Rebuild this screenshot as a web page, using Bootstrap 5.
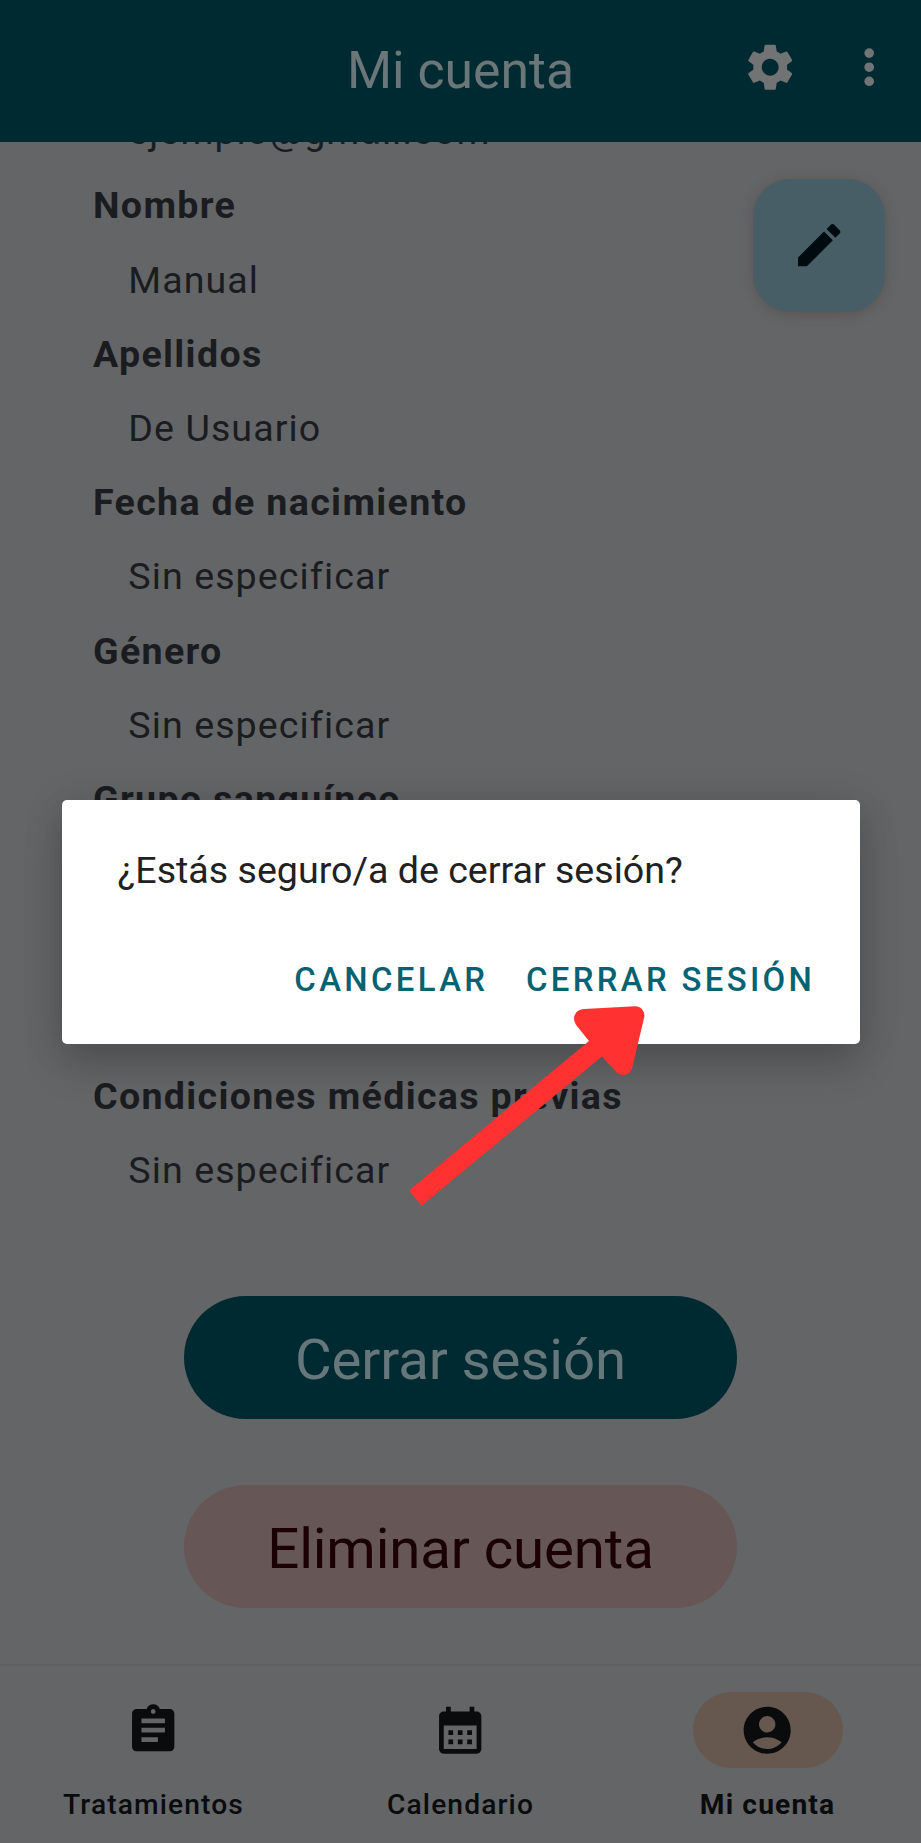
<!DOCTYPE html>
<html lang="es">
<head>
<meta charset="utf-8">
<meta name="viewport" content="width=device-width, initial-scale=1">
<title>Mi cuenta</title>
<link href="https://cdn.jsdelivr.net/npm/bootstrap@5.3.0/dist/css/bootstrap.min.css" rel="stylesheet">
<style>
  body { font-family: Roboto, "Liberation Sans", sans-serif; background: #646567; color: #0a0b0d; }
  .app-screen { width: 921px; height: 1843px; }
  .app-header { height: 142px; background: #002a31; color: #6a7678; }
  .app-header h1 { font-size: 51.7px; line-height: 60px; padding-top: 40.5px; letter-spacing: 0; }
  .header-actions { top: 39px; right: 24px; gap: 42.5px; color: #717375; }
  .icon { width: 56.4px; height: 56.4px; fill: currentColor; display: block; flex: none; }
  .fab { top: 37px; right: 36.5px; width: 131.6px; height: 132.6px; border-radius: 37.6px; background: #485e66; color: #000b10; box-shadow: 0 2px 12px rgba(75,60,50,.4); }
  .profile { margin: -47.8px 0 0 93px; font-size: 37.6px; line-height: 74.2px; color: #1a1c20; }
  .profile dt { letter-spacing: 1.33px; }
  .profile dd { margin: 0 0 0 35.3px; letter-spacing: 1.08px; }
  .profile .after-gap { margin-top: 222.6px; }
  .account-btn { width: 552.5px; height: 123px; font-size: 56.4px; line-height: 1; letter-spacing: -.12px; border: 0; }
  .btn-logout { background: #002a31; color: #66777b; margin-top: 89.2px; padding: 10px 0 5px; }
  .btn-delete { background: #665756; color: #1a0002; margin-top: 65.5px; padding: 11px 0 5px; }
  .bottom-nav { height: 179px; border-top: 2px solid #5e6062; font-size: 28.2px; letter-spacing: 1.12px; padding-top: 26px; }
  .nav-pill { width: 150px; height: 75.5px; }
  .nav-pill.selected { background: #66584e; }
  .nav-caption { line-height: 34px; margin-top: 20.5px; }
  .dialog { left: 61.5px; top: 799.5px; width: 798.3px; height: 244.5px; background: #fff; border-radius: 5px; box-shadow: 0 22px 40px rgba(0,0,0,.16), 0 4px 42px rgba(0,0,0,.12); }
  .dialog-text { font-size: 37.6px; line-height: 46px; padding: 47px 0 0 56px; color: #212122; }
  .dialog-actions { gap: 37.5px; padding-right: 44.5px; margin-top: 63px; }
  .dialog-actions button { font-size: 32.9px; line-height: 48px; font-weight: 500; letter-spacing: 3.35px; color: #056270; }
  .pointer-arrow { left: 0; top: 0; pointer-events: none; }
</style>
</head>
<body>
<div class="app-screen position-relative overflow-hidden d-flex flex-column">
  <header class="app-header position-relative z-1 flex-shrink-0 text-center">
    <h1 class="m-0 fw-normal">Mi cuenta</h1>
    <div class="header-actions position-absolute d-flex">
      <svg class="icon" viewBox="0 0 24 24"><path d="M19.14,12.94c0.04-0.3,0.06-0.61,0.06-0.94c0-0.32-0.02-0.64-0.07-0.94l2.03-1.58c0.18-0.14,0.23-0.41,0.12-0.61l-1.92-3.32c-0.12-0.22-0.37-0.29-0.59-0.22l-2.39,0.96c-0.5-0.38-1.03-0.7-1.62-0.94L14.4,2.81c-0.04-0.24-0.24-0.41-0.48-0.41h-3.84c-0.24,0-0.43,0.17-0.47,0.41L9.25,5.35C8.66,5.59,8.12,5.92,7.63,6.29L5.24,5.33c-0.22-0.08-0.47,0-0.59,0.22L2.74,8.87C2.62,9.08,2.66,9.34,2.86,9.48l2.03,1.58C4.84,11.36,4.8,11.69,4.8,12s0.02,0.64,0.07,0.94l-2.03,1.58c-0.18,0.14-0.23,0.41-0.12,0.61l1.92,3.32c0.12,0.22,0.37,0.29,0.59,0.22l2.39-0.96c0.5,0.38,1.03,0.7,1.62,0.94l0.36,2.54c0.05,0.24,0.24,0.41,0.48,0.41h3.84c0.24,0,0.44-0.17,0.47-0.41l0.36-2.54c0.59-0.24,1.13-0.56,1.62-0.94l2.39,0.96c0.22,0.08,0.47,0,0.59-0.22l1.92-3.32c0.12-0.22,0.07-0.47-0.12-0.61L19.14,12.94z M12,15.6c-1.98,0-3.6-1.62-3.6-3.6s1.62-3.6,3.6-3.6s3.6,1.62,3.6,3.6S13.98,15.6,12,15.6z"/></svg>
      <svg class="icon" viewBox="0 0 24 24"><circle cx="12" cy="6" r="2.05"/><circle cx="12" cy="12" r="2.05"/><circle cx="12" cy="18" r="2.05"/></svg>
    </div>
  </header>

  <main class="position-relative flex-grow-1 overflow-hidden">
    <dl class="profile">
      <dd>ejemplo@gmail.com</dd>
      <dt>Nombre</dt>
      <dd>Manual</dd>
      <dt>Apellidos</dt>
      <dd>De Usuario</dd>
      <dt>Fecha de nacimiento</dt>
      <dd>Sin especificar</dd>
      <dt>Género</dt>
      <dd>Sin especificar</dd>
      <dt>Grupo sanguíneo</dt>
      <dt class="after-gap">Condiciones médicas previas</dt>
      <dd>Sin especificar</dd>
    </dl>
    <div class="d-flex flex-column align-items-center">
      <button class="btn account-btn btn-logout rounded-pill" type="button">Cerrar sesión</button>
      <button class="btn account-btn btn-delete rounded-pill" type="button">Eliminar cuenta</button>
    </div>
    <button class="btn fab position-absolute border-0 p-0 d-flex align-items-center justify-content-center" type="button" aria-label="Editar">
      <svg class="icon" viewBox="0 0 24 24"><path d="M3 17.25V21h3.75L17.81 9.94l-3.75-3.75L3 17.25zM20.71 7.04c.39-.39.39-1.02 0-1.41l-2.34-2.34c-.39-.39-1.02-.39-1.41 0l-1.83 1.83 3.75 3.75 1.83-1.83z"/></svg>
    </button>
  </main>

  <nav class="bottom-nav flex-shrink-0">
    <div class="row g-0 text-center">
      <div class="col d-flex flex-column align-items-center">
        <div class="nav-pill rounded-pill d-flex align-items-center justify-content-center">
          <svg class="icon" viewBox="0 0 24 24"><path d="M19 3h-4.180C14.4 1.84 13.3 1 12 1c-1.3 0-2.4.84-2.82 2H5c-1.1 0-2 .9-2 2v14c0 1.1.9 2 2 2h14c1.1 0 2-.9 2-2V5c0-1.1-.9-2-2-2zm-7 0c.55 0 1 .45 1 1s-.45 1-1 1-1-.45-1-1 .45-1 1-1zm2 14H7v-2h7v2zm3-4H7v-2h10v2zm0-4H7V7h10v2z"/></svg>
        </div>
        <div class="nav-caption fw-medium">Tratamientos</div>
      </div>
      <div class="col d-flex flex-column align-items-center">
        <div class="nav-pill rounded-pill d-flex align-items-center justify-content-center">
          <svg class="icon" viewBox="0 0 24 24"><path d="M19 4h-1V2h-2v2H8V2H6v2H5c-1.11 0-1.99.9-1.99 2L3 20c0 1.1.89 2 2 2h14c1.1 0 2-.9 2-2V6c0-1.1-.9-2-2-2zm0 16H5V10h14v10zM9 14H7v-2h2v2zm4 0h-2v-2h2v2zm4 0h-2v-2h2v2zm-8 4H7v-2h2v2zm4 0h-2v-2h2v2zm4 0h-2v-2h2v2z"/></svg>
        </div>
        <div class="nav-caption fw-medium">Calendario</div>
      </div>
      <div class="col d-flex flex-column align-items-center">
        <div class="nav-pill selected rounded-pill d-flex align-items-center justify-content-center">
          <svg class="icon" viewBox="0 0 24 24"><path d="M12 2C6.48 2 2 6.48 2 12s4.48 10 10 10 10-4.48 10-10S17.52 2 12 2zm0 4c1.93 0 3.5 1.57 3.5 3.5S13.93 13 12 13s-3.5-1.57-3.5-3.5S10.07 6 12 6zm0 14c-2.03 0-4.43-.82-6.14-2.88C7.55 15.8 9.68 15 12 15s4.45.8 6.14 2.12C16.43 19.18 14.03 20 12 20z"/></svg>
        </div>
        <div class="nav-caption fw-bold">Mi cuenta</div>
      </div>
    </div>
  </nav>

  <div class="dialog position-absolute" role="dialog">
    <p class="dialog-text m-0">¿Estás seguro/a de cerrar sesión?</p>
    <div class="dialog-actions d-flex justify-content-end">
      <button class="btn border-0 p-0 text-uppercase" type="button">Cancelar</button>
      <button class="btn border-0 p-0 text-uppercase" type="button">Cerrar sesión</button>
    </div>
  </div>

  <svg class="pointer-arrow position-absolute" width="921" height="1843" viewBox="0 0 921 1843"><path fill="#ff3131" d="M409 1190.5L589 1041L576.7 1025.7C571 1018.5 575 1009.5 584 1009L635 1006.3C641 1006.3 645.2 1011.5 644.3 1017L632.3 1067.3C630.5 1075.5 620.5 1078 615 1070.7L602 1056.5L421.5 1205.8Z"/></svg>
</div>
<script src="https://cdn.jsdelivr.net/npm/bootstrap@5.3.0/dist/js/bootstrap.bundle.min.js"></script>
</body>
</html>
